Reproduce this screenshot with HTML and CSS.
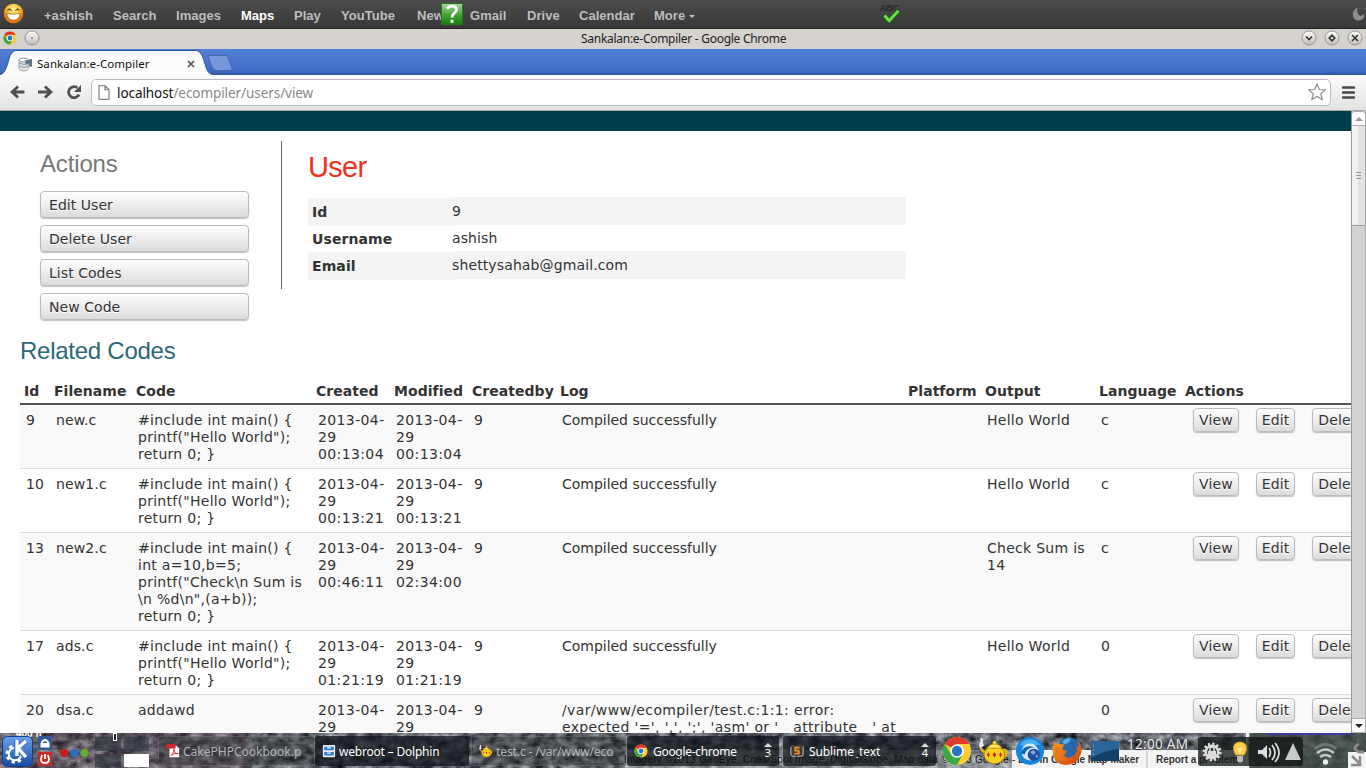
FILE: index.html
```html
<!DOCTYPE html>
<html lang="en">
<head>
<meta charset="utf-8">
<title>Sankalan:e-Compiler</title>
<link rel="stylesheet" href="styles.css">
</head>
<body>
<svg class="defs" width="0" height="0">
  <defs>
    <linearGradient id="knob" x2="0" y2="1"><stop stop-color="#fff"/><stop offset="1" stop-color="#bdbbb8"/></linearGradient>
    <radialGradient id="smile" cy=".3"><stop stop-color="#fff7a0"/><stop offset=".65" stop-color="#ffc13a"/><stop offset="1" stop-color="#e27814"/></radialGradient>
    <linearGradient id="green" x2="0" y2="1"><stop stop-color="#a4dc9a"/><stop offset=".5" stop-color="#48a83a"/><stop offset="1" stop-color="#147a0a"/></linearGradient>
    <linearGradient id="blue" x2="0" y2="1"><stop stop-color="#6ba4ec"/><stop offset="1" stop-color="#164a9e"/></linearGradient>
    <linearGradient id="fox" x2="1" y2="1"><stop stop-color="#f6a01c"/><stop offset="1" stop-color="#d23c10"/></linearGradient>
    <symbol id="chrome" viewBox="0 0 32 32">
      <circle cx="16" cy="16" r="15" fill="#fc3"/>
      <path d="M16 16 3 8.500A15 15 0 0 1 29 8.500H16Z" fill="#dd3a2c"/>
      <path d="M3 8.500 9.900 20 16 31A15 15 0 0 1 3 8.500Z" fill="#36a845"/>
      <path d="m9.900 20 6.100 11 6-11.500Z" fill="#36a845"/>
      <circle cx="16" cy="16" r="7.200" fill="#fff"/><circle cx="16" cy="16" r="5.500" fill="#2b74c4"/>
    </symbol>
    <symbol id="teapot" viewBox="0 0 32 32">
      <path d="M25 15c7-3 6 8-1 9M8 19 2 13" fill="none" stroke="#e6ba10" stroke-width="2.500"/>
      <path d="M2 13c-4-6 2-5 0-11 5 0 1 5 4 8Z" fill="#eee"/>
      <ellipse cx="17" cy="20" rx="11" ry="9.500" fill="#f4cf1c" stroke="#a97c00" stroke-width=".7"/>
      <path d="M9 13c4-6 12-6 16 0Z" fill="#ffe65b" stroke="#a97c00" stroke-width=".7"/><circle cx="17" cy="7" r="2" fill="#f4cf1c"/>
      <path d="m10.500 17 1.500 3-1.500 3-1.500-3Zm6.500 0 2 3-2 3-2-3Zm6.500 0 1.500 3-1.500 3-1.500-3Z" fill="#d3242a"/>
    </symbol>
    <filter id="rock" x="0" y="0" width="100%" height="100%" color-interpolation-filters="sRGB">
      <feTurbulence type="fractalNoise" baseFrequency=".09 .13" numOctaves="4" seed="8"/>
      <feColorMatrix values=".9 .1 0 0 -.13  .9 .1 0 0 -.115  .9 .1 0 0 -.09  0 0 0 0 1"/>
    </filter>
  </defs>
</svg>
<div class="screen">
  <header class="mapbar">
    <svg class="smile" viewBox="0 0 22 22"><circle cx="11" cy="11" r="10.300" fill="url(#smile)"/><path d="M4 11q7 1.500 14 0-1 7-7 7t-7-7Z" fill="#fff" stroke="#9b5d12" stroke-width=".7"/><path d="m4.500 8 2.200-1.800L9 8m4 0 2.300-1.800L17.500 8" fill="none" stroke="#65400d" stroke-width="1.200"/></svg>
    <nav class="mapnav"><span>+ashish</span><span>Search</span><span>Images</span><span class="on">Maps</span><span>Play</span><span>YouTube</span><span>News</span><span>Gmail</span><span>Drive</span><span>Calendar</span><span>More <i class="caret"></i></span></nav>
    <svg class="help" viewBox="0 0 22 22"><rect x=".5" y=".5" width="21" height="21" rx="1" fill="url(#green)" stroke="#247a18"/><path d="M6 5.500Q8 3.200 11 3.200q4.500 0 4.500 3.500c0 3-4.400 3.500-4.400 7.800" fill="none" stroke="#fff" stroke-width="2.800"/><path d="M9.500 16.800h3v3h-3Z" fill="#fff"/></svg>
    <span class="abc">ABC</span>
    <svg class="check" viewBox="0 0 20 16"><path d="m2.500 8 5 5.500L17.500 3" fill="none" stroke="#176b10" stroke-width="5"/><path d="m2.500 8 5 5.500L17.500 3" fill="none" stroke="#75dc53" stroke-width="3"/></svg>
    <svg class="swirl" viewBox="0 0 14 14"><path d="M5.500.7C-1 3-.8 13 6.500 13.500c5 .2 7-4.500 4.500-7C11 10 4 10 5.500.7Z" fill="#8d8d8d"/><path d="M7 1h2m2 .5h2" stroke="#666"/></svg>
  </header>

  <div class="titlebar">
    <svg class="tb-chrome"><use href="#chrome"/></svg>
    <svg class="knob k0" viewBox="0 0 16 16"><circle cx="8" cy="8" r="7" fill="url(#knob)" stroke="#989693"/><circle cx="8" cy="8" r=".8" fill="#555"/></svg>
    <span class="wintitle">Sankalan:e-Compiler - Google Chrome</span>
    <div class="knobs">
      <svg class="knob" viewBox="0 0 16 16"><circle cx="8" cy="8" r="7" fill="url(#knob)" stroke="#989693"/><path d="m5 6.500 3 3 3-3" fill="none" stroke="#333" stroke-width="1.600"/></svg>
      <svg class="knob" viewBox="0 0 16 16"><circle cx="8" cy="8" r="7" fill="url(#knob)" stroke="#989693"/><path d="m8 5.200 2.800 2.800L8 10.800 5.200 8Z" fill="none" stroke="#333" stroke-width="1.600"/></svg>
      <svg class="knob" viewBox="0 0 16 16"><circle cx="8" cy="8" r="7" fill="url(#knob)" stroke="#989693"/><path d="m5 5 6 6m0-6-6 6" stroke="#333" stroke-width="1.600"/></svg>
    </div>
  </div>

  <div class="tabstrip">
    <svg class="tabshape" viewBox="0 0 240 26"><path d="M0 25.500C5 25 7 17 9 10Q11 2 16 1.500H196Q201 2 203.500 10C206 18 207 25 213 25.500V26H0Z" fill="#fbfbfb"/><path d="M0 25.500C5 25 7 17 9 10Q11 2 16 1.500H196Q201 2 203.500 10C206 18 207 25 213 25.500" fill="none" stroke="#2f549b"/><path d="M209 6.500h16.500q2 0 2.800 2l3.700 11q.5 2-1.500 2h-14q-3 0-4-2.500l-4-10q-1-2.500.5-2.500Z" fill="#7598da" stroke="#4167ae"/></svg>
    <svg class="dbicon" viewBox="0 0 15 15"><path d="M1 3v8c0 4 9 4 10 0V3" fill="#dce2e7" stroke="#a0a9b0"/><ellipse cx="6" cy="3" rx="5" ry="2" fill="#fff" stroke="#8f999f"/><path d="M1 6q5 3 10 0M1 9q5 3 10 0" fill="none" stroke="#8f999f"/><path d="M7 3.500 14 2v8l-3-1V6L8 8Z" fill="#5d7488"/></svg>
    <span class="tabtitle">Sankalan:e-Compiler</span>
    <svg class="tabx" viewBox="0 0 8 8"><path d="m1 1 6 6m0-6-6 6" stroke="#555" stroke-width="1.700"/></svg>
  </div>

  <div class="toolbar">
    <svg class="nav" viewBox="0 0 80 18"><path d="M16.500 9H4m6-5.500L4.200 9l5.800 5.500M30 9h13m-6-5.500L42.800 9 37 14.500" fill="none" stroke="#505050" stroke-width="2.900"/><path d="M69.300 4.700a5.500 5.500 0 1 0 1.700 7" fill="none" stroke="#505050" stroke-width="2.800"/><path d="M73 2v7h-7Z" fill="#505050"/></svg>
    <div class="omnibox">
      <svg class="page-ico" viewBox="0 0 12 15"><path d="M1 .7h6l4 4v9.600H1Zm6 0v4h4" fill="#fff" stroke="#8b8b8b" stroke-width="1.300"/></svg>
      <span class="url"><b>localhost</b>/ecompiler/users/view</span>
      <svg class="star" viewBox="0 0 18 18"><path d="m9 1 2.400 5.500 5.900.4-4.500 3.900 1.500 6L9 13.500l-5.300 3.300 1.500-6L.7 6.900l5.900-.4Z" fill="#fff" stroke="#8d8d8d" stroke-width="1.200" stroke-linejoin="round"/></svg>
    </div>
    <svg class="menu" viewBox="0 0 13 13"><path d="M1.200 1.500h10.600M1.200 6.500h10.600M1.200 11.500h10.600" stroke="#484848" stroke-width="2.700" stroke-linecap="round"/></svg>
  </div>

  <div class="viewport">
    <main class="page">
      <div class="band"></div>
      <div class="top">
        <section class="actions">
          <h3>Actions</h3>
          <a class="btn wide">Edit User</a><a class="btn wide">Delete User</a><a class="btn wide">List Codes</a><a class="btn wide">New Code</a>
        </section>
        <section class="user">
          <h2>User</h2>
          <dl><dt class="alt">Id</dt><dd class="alt">9</dd><dt>Username</dt><dd>ashish</dd><dt class="alt">Email</dt><dd class="alt">shettysahab@gmail.com</dd></dl>
        </section>
      </div>
      <h3 class="related">Related Codes</h3>
      <table>
        <colgroup><col class="c1"><col class="c2"><col class="c3"><col class="c4"><col class="c4"><col class="c6"><col class="c7"><col class="c8"><col class="c9"><col class="c10"><col class="c11"></colgroup>
        <thead><tr><th>Id</th><th>Filename</th><th>Code</th><th>Created</th><th>Modified</th><th>Createdby</th><th>Log</th><th>Platform</th><th>Output</th><th>Language</th><th>Actions</th></tr></thead>
        <tbody>
          <tr><td>9</td><td>new.c</td><td>#include int main() {<br>printf("Hello World");<br>return 0; }</td><td>2013-04-<br>29<br>00:13:04</td><td>2013-04-<br>29<br>00:13:04</td><td>9</td><td class="ok">Compiled successfully</td><td></td><td>Hello World</td><td>c</td><td class="acts"><div><a class="btn">View</a><a class="btn">Edit</a><a class="btn">Delete</a></div></td></tr>
          <tr><td>10</td><td>new1.c</td><td>#include int main() {<br>printf("Hello World");<br>return 0; }</td><td>2013-04-<br>29<br>00:13:21</td><td>2013-04-<br>29<br>00:13:21</td><td>9</td><td class="ok">Compiled successfully</td><td></td><td>Hello World</td><td>c</td><td class="acts"><div><a class="btn">View</a><a class="btn">Edit</a><a class="btn">Delete</a></div></td></tr>
          <tr><td>13</td><td>new2.c</td><td>#include int main() {<br>int a=10,b=5;<br>printf("Check\n Sum is<br>\n %d\n",(a+b));<br>return 0; }</td><td>2013-04-<br>29<br>00:46:11</td><td>2013-04-<br>29<br>02:34:00</td><td>9</td><td class="ok">Compiled successfully</td><td></td><td>Check Sum is<br>14</td><td>c</td><td class="acts"><div><a class="btn">View</a><a class="btn">Edit</a><a class="btn">Delete</a></div></td></tr>
          <tr><td>17</td><td>ads.c</td><td>#include int main() {<br>printf("Hello World");<br>return 0; }</td><td>2013-04-<br>29<br>01:21:19</td><td>2013-04-<br>29<br>01:21:19</td><td>9</td><td class="ok">Compiled successfully</td><td></td><td>Hello World</td><td>0</td><td class="acts"><div><a class="btn">View</a><a class="btn">Edit</a><a class="btn">Delete</a></div></td></tr>
          <tr><td>20</td><td>dsa.c</td><td>addawd</td><td>2013-04-<br>29</td><td>2013-04-<br>29</td><td>9</td><td class="err">/var/www/ecompiler/test.c:1:1: error:<br>expected '=', ',', ';', 'asm' or '__attribute__' at</td><td></td><td></td><td>0</td><td class="acts"><div><a class="btn">View</a><a class="btn">Edit</a><a class="btn">Delete</a></div></td></tr>
        </tbody>
      </table>
    </main>
    <div class="scroll">
      <div class="sbtn"><i class="up"></i></div>
      <div class="thumb"><i></i><i></i><i></i></div>
      <div class="track"></div>
      <div class="sbtn last"><i class="down"></i></div>
    </div>
  </div>

  <footer class="taskbar">
    <svg class="rock"><rect width="1366" height="35" filter="url(#rock)"/><path d="M0 0h250v35H0Z" fill="#6d3b4c" opacity=".22"/><path d="M1250 0h116v35h-116Z" fill="#3e4b43" opacity=".75"/><path d="M1012 17h234v18h-234ZM1246 0h3v35h-3Z" fill="#f3f3f3"/><path d="M625 17h387v18H625Z" fill="#fff" opacity=".3"/><path d="M1266 0h86v2h-86Z" fill="#3b3b9c"/><path d="M1147 18v17" stroke="#bbb"/></svg>
    <div class="mapreport"><span>Edit in Google Map Maker</span><span>Report a problem</span></div>
    <span class="scale">400 ft</span>
    <svg class="kmenu" viewBox="0 0 31 31"><rect x=".5" y=".5" width="30" height="30" rx="5" fill="url(#blue)" stroke="#123f8c"/><circle cx="13" cy="18" r="8" fill="none" stroke="#fff" stroke-width="3" stroke-dasharray="3.300 3"/><circle cx="13" cy="18" r="6.300" fill="none" stroke="#fff" stroke-width="2"/><path d="M15 4v16M24 5l-8 7 8 9" fill="none" stroke="#3c79cc" stroke-width="6"/><path d="M15 4v16M24 5l-8 7 8 9" fill="none" stroke="#fff" stroke-width="3.300"/></svg>
    <svg class="lock" viewBox="0 0 14 30"><rect width="14" height="14" rx="1" fill="#345b97"/><path d="M4 11V6q3-4 6 0v5" fill="none" stroke="#fff" stroke-width="2"/><path d="M2.500 7h9v4.500h-9Z" fill="#fff"/><rect y="16" width="14" height="14" rx="1" fill="#c52d28"/><path d="M4 19q-3 8 3 8t3-8M7 18v5" fill="none" stroke="#fff" stroke-width="1.800"/></svg>
    <svg class="dots" viewBox="0 0 30 10"><circle cx="5" cy="5" r="4.200" fill="#c52020"/><circle cx="15.500" cy="5" r="4.200" fill="#2870c0"/><circle cx="25.500" cy="5" r="4.200" fill="#65ad30"/></svg>
    <div class="pager"><i></i><i></i><i></i><i class="cur"></i></div>
    <i class="marker"></i>
    <div class="task dim t1"><svg viewBox="0 0 16 16"><path d="M4 2h8l3 3v10H4Z" fill="#fff"/><path d="M0 0h11v5H0Z" fill="#c9282a"/><path d="M6 13q4-4 3-7 1 6 5 5-5-1-8 2Z" fill="none" stroke="#d22"/></svg><span>CakePHPCookbook.p</span></div>
    <div class="task t2"><svg viewBox="0 0 16 16"><rect x="1" y="1" width="14" height="14" rx="1" fill="#e4eefa"/><path d="M2.500 3h11v4h-11Zm0 6h11v4h-11Z" fill="#2f7ed2"/><path d="M6 4.500h4m-4 6h4" stroke="#fff" stroke-width="1.500"/></svg><span>webroot – Dolphin</span></div>
    <div class="task dim t3"><svg viewBox="0 0 32 32"><use href="#teapot"/></svg><span>test.c - /var/www/eco</span></div>
    <div class="task t4"><svg viewBox="0 0 32 32"><use href="#chrome"/></svg><span>Google-chrome</span><em><i></i>3</em></div>
    <div class="task t5"><svg viewBox="0 0 16 16"><rect x="1" y="1" width="14" height="14" fill="#3b3b3b"/><path d="M1 3v9q0 2 2 2h10q2 0 2-2V3" fill="none" stroke="#d3d3d3"/><path d="M11 4H6v3.500h4V11H5" fill="none" stroke="#f58c1e" stroke-width="2"/></svg><span>Sublime_text</span><em><i></i>4</em></div>
    <div class="mapcredit">Imagery ©2013 GeoEye, Cnes/Spot Image, DigitalGlobe, Map data ©2013 Google -</div>
    <svg class="launch l1" viewBox="0 0 32 32"><use href="#chrome"/></svg>
    <svg class="launch l2" viewBox="0 0 32 32"><use href="#teapot"/></svg>
    <svg class="launch l3" viewBox="0 0 32 32"><circle cx="16" cy="16" r="15" fill="#1686dc"/><path d="M5 9q11-11 22 0l-8 1-8 2Z" fill="#4bb0f2"/><circle cx="16" cy="17" r="9" fill="#d9e8f6"/><circle cx="20" cy="20" r="6.500" fill="#204f9c"/><path d="M6 18q4-10 15-6-9 0-11 8Z" fill="#0f67b8"/><path d="m16 17 4-2 2 3-3 2Zm6 3 3 1-2 3Z" fill="#84afd8"/></svg>
    <svg class="launch l4" viewBox="0 0 32 32"><circle cx="18" cy="14" r="12.500" fill="#2668ab"/><path d="M11 6q5-5 9-3l-2 4-5 2Z" fill="#5eb0df"/><path d="M3 6q1 3 4 2l6 1-2 5 5 2-3 5q6 5 12-2 3-4 1-9l3 2-1-7q6 8 2 16-5 10-16 10Q2 30 1 18 0 11 3 6Z" fill="url(#fox)"/><path d="M3 10q4 2 6 7-2 5 5 10-10-2-11-17Z" fill="#ef7419"/></svg>
    <svg class="launch l5" viewBox="0 0 28 20"><rect width="28" height="20" fill="#123f68"/><path d="M0 0h28v8Q14 9 0 17Z" fill="#2a6499"/><path d="M2 5h1m-1 4h1m-1 4h1" stroke="#f0d868"/></svg>
    <span class="clock">12:00 AM</span>
    <svg class="tray" viewBox="0 0 168 35"><path d="M3 4h47v29H3q-3 0-3-3V7q0-3 3-3Z" fill="#171c1b" opacity=".78"/><path d="M50 4h52q3 0 3 3v23q0 3-3 3H50Z" fill="#171c1b" opacity=".86"/><circle cx="14" cy="19" r="7.500" fill="none" stroke="#ddd" stroke-width="4" stroke-dasharray="2 1.927"/><circle cx="14" cy="19" r="6.300" fill="none" stroke="#ddd" stroke-width="2.500"/><path d="M12 18v-3q2-2 4 0v3" fill="none" stroke="#ddd" stroke-width="1.500"/><path d="M10 18h8v7h-8Z" fill="#ddd"/><path d="M38 22c-5-7-2-13 4-13s9 6 4 13Z" fill="#f9cf4c" stroke="#d69b24"/><path d="M39 16h6m-3 0v5" stroke="#fff2b0" stroke-width="1.500"/><path d="M39 23h6v5q-3 3-6 0Z" fill="#bbb"/><path d="M60 17h4l5-5v14l-5-5h-4Z" fill="#ddd"/><path d="M71 15q3 4 0 9m3-12q6 8 0 15m3-17q8 10 0 19" fill="none" stroke="#ddd" stroke-width="1.700"/><path d="m95 10 8 17H87Z" fill="#c7cbc9"/><path d="M117 16q10.500-9 21 0" fill="none" stroke="#6f7672" stroke-width="3"/><path d="M119 20q8.500-7 17 0m-14 4q5.500-4 11 0" fill="none" stroke="#c4c8c5" stroke-width="2.500"/><circle cx="127.500" cy="29" r="2.700" fill="#eee"/><path d="M150 19h18v16h-18Z" fill="#f2f2f2"/><path d="m154 23 7 7m1-7v9h-9" fill="none" stroke="#8b8b8b" stroke-width="2.500"/><path d="M161 11q-8 4 0 8h5" fill="none" stroke="#888" stroke-width="3"/></svg>
  </footer>
</div>
</body>
</html>
```
FILE: styles.css
```css
* { box-sizing: border-box; }
body { margin: 0; overflow: hidden; font-family: "DejaVu Sans", Verdana, sans-serif; color: #333; }
svg { display: block; flex: none; }
.defs { position: absolute; }
.screen { width: 1366px; height: 768px; display: flex; flex-direction: column; overflow: hidden; background: #fff; }

.mapbar { position: relative; height: 29px; flex: none; background: linear-gradient(#4b4b4b, #393939); border-bottom: 1px solid #211e1f; }
.mapnav { display: grid; grid-template-columns: 69px 63px 65px 53px 47px 76px 53px 57px 52px 75px 60px; padding-left: 44px; font: bold 13px/31px "Liberation Sans", Arial, sans-serif; color: #bdbdbd; letter-spacing: .03px; white-space: nowrap; }
.mapnav .on { color: #fff; }
.caret { display: inline-block; border: 3px solid transparent; border-top-color: #bdbdbd; border-bottom: 0; vertical-align: 2px; }
.smile { position: absolute; left: 3px; top: 3px; width: 21px; height: 21px; }
.help { position: absolute; left: 441px; top: 3px; width: 22px; height: 22px; }
.abc { position: absolute; left: 880px; top: 3px; font: bold 9px/10px "Liberation Sans", sans-serif; color: #292929; }
.check { position: absolute; left: 882px; top: 8px; width: 19px; height: 15px; }
.swirl { position: absolute; left: 1352px; top: 7px; width: 14px; height: 14px; }

.titlebar { position: relative; height: 20px; flex: none; display: flex; align-items: center; padding: 0 3px 2px 3px; background: #d6d2ce; }
.tb-chrome { width: 14px; height: 14px; }
.knob { width: 16px; height: 16px; }
.k0 { margin-left: 7px; }
.wintitle { margin: 2px 0 0 541px; font: 12px/18px "Noto Sans", sans-serif; letter-spacing: -.28px; color: #222; white-space: nowrap; }
.knobs { display: flex; gap: 7px; margin-left: auto; }

.tabstrip { position: relative; height: 26px; flex: none; display: flex; align-items: center; padding: 4px 0 0 18px; background: linear-gradient(#5280d5, #3f6cc7 85%, #2f549b); }
.tabshape { position: absolute; left: 0; top: 0; width: 240px; height: 26px; }
.dbicon { position: relative; width: 15px; height: 15px; }
.tabtitle { position: relative; width: 150px; margin-left: 4px; font: 11.500px/18px "Noto Sans", sans-serif; letter-spacing: .06px; color: #111; white-space: nowrap; }
.tabx { position: relative; width: 8px; height: 8px; }

.toolbar { height: 36px; flex: none; display: flex; align-items: center; padding: 0 11px 1px 8px; background: linear-gradient(#fbfbfb, #e3e3e3); border-bottom: 1px solid #aaa; }
.nav { width: 80px; height: 18px; margin-right: 3px; }
.omnibox { display: flex; align-items: center; width: 1240px; height: 27px; padding: 0 4px 0 6px; background: #fff; border: 1px solid #bdbdbd; border-radius: 5px; }
.page-ico { width: 12px; height: 15px; }
.url { margin: 1px 0 0 7px; font: 13.500px/20px "Noto Sans", sans-serif; letter-spacing: -.07px; color: #888; }
.url b { font-weight: normal; color: #111; }
.star { width: 18px; height: 18px; margin-left: auto; }
.menu { width: 13px; height: 13px; margin-left: 11px; }

.viewport { display: flex; height: 622px; flex: none; overflow: hidden; }
.page { width: 1351px; overflow: hidden; font-size: 14px; line-height: 17px; }
.band { height: 20px; background: #003d4c; }
.top { display: flex; height: 198px; padding: 10px 0 0 40px; }
.actions { width: 242px; height: 148px; border-right: 1px solid #666; }
h2, h3 { margin: 0; font-family: "Liberation Sans", Arial, sans-serif; font-weight: normal; white-space: nowrap; }
.actions h3 { height: 50px; padding-top: 8px; font-size: 24px; line-height: 30px; letter-spacing: -.15px; color: #777; }
.btn { display: block; padding: 2px 5px; color: #333; font-size: 14px; line-height: 18px; border: 1px solid #bbb; border-radius: 4px; background: linear-gradient(#fefefe, #dcdcdc); box-shadow: 0 1px 1px rgba(0,0,0,.25); text-shadow: 0 1px 0 #fff; white-space: nowrap; letter-spacing: .12px; }
.wide { width: 209px; height: 27px; margin-bottom: 7px; padding: 4px 8px 2px; line-height: 19px; letter-spacing: .05px; }
.user { margin-left: 26px; width: 598px; }
.user h2 { height: 57px; padding-top: 9px; font-size: 29px; line-height: 34px; letter-spacing: -.7px; color: #ee3322; }
dl { display: grid; grid-template-columns: 148px 450px; grid-template-rows: 27px 27px 27px; margin: 0; }
dt { padding: 6px 4px; height: 28px; font-weight: bold; letter-spacing: .1px; }
dd { margin: -1px 0 0 -4px; padding: 6px 0; height: 28px; width: 454px; letter-spacing: .12px; }
.alt { background: #f4f4f4; }
.related { height: 46px; padding: 7px 0 0 20px; font-size: 24px; line-height: 30px; letter-spacing: -.26px; color: #2c6877; }
table { width: 1400px; margin-left: 20px; table-layout: fixed; border-collapse: separate; border-spacing: 0; }
.c1 { width: 30px; } .c2 { width: 82px; } .c3 { width: 180px; } .c4 { width: 78px; } .c6 { width: 88px; } .c7 { width: 348px; } .c8 { width: 77px; } .c9 { width: 114px; } .c10 { width: 86px; } .c11 { width: 239px; }
th { height: 30px; padding: 8px 4px 3px; text-align: left; border-bottom: 2px solid #555; letter-spacing: .04px; }
td { padding: 7px 6px 5px; vertical-align: top; border-bottom: 1px solid #ddd; white-space: nowrap; letter-spacing: .28px; }
td:nth-child(1), td:nth-child(2) { letter-spacing: .12px; }
td:nth-child(4), td:nth-child(5) { letter-spacing: .38px; }
td.ok { letter-spacing: -.02px; }
td.err { letter-spacing: .36px; }
tbody tr:nth-child(odd) { background: #f9f9f9; }
td.acts { padding: 3px 0 0 12px; }
.acts div { display: flex; gap: 17px; }

.scroll { width: 15px; display: flex; flex-direction: column; border-left: 1px solid #999; border-right: 1px solid #aaa; background: #d2d2d2; }
.sbtn { height: 15px; display: flex; align-items: center; justify-content: center; background: #fcfcfc; border: 1px solid #aaa; border-width: 1px 0; border-radius: 3px 3px 0 0; }
.sbtn.last { border-radius: 0 0 3px 3px; }
.up { border: 4px solid transparent; border-top: 0; border-bottom-color: #999; }
.down { border: 4px solid transparent; border-bottom: 0; border-top-color: #222; }
.thumb { height: 100px; display: flex; flex-direction: column; gap: 2px; align-items: center; justify-content: center; background: linear-gradient(90deg, #f2f2f2 50%, #e2e2e2 50%); border-bottom: 1px solid #999; }
.thumb i { width: 5px; height: 1px; background: #999; }
.track { flex: 1; }

.taskbar { position: relative; display: flex; align-items: center; height: 35px; flex: none; padding: 1px 0 0 2px; overflow: hidden; font-family: "Noto Sans", sans-serif; }
.taskbar > * { position: relative; }
.taskbar .rock { position: absolute; left: 0; top: 0; width: 1366px; height: 35px; }
.taskbar .mapcredit { position: absolute; left: 624px; top: 20px; font: 10px/13px "Liberation Sans", sans-serif; color: #111; white-space: nowrap; letter-spacing: .27px; }
.taskbar .mapreport { position: absolute; left: 1018px; top: 20px; display: flex; gap: 17px; font: bold 10px/13px "Liberation Sans", sans-serif; color: #333; white-space: nowrap; letter-spacing: -.05px; }
.taskbar .scale { position: absolute; left: 16px; top: -5px; font: bold 10px/12px "Liberation Sans", sans-serif; color: #fff; }
.taskbar .marker { position: absolute; left: 113px; top: 0; width: 4px; height: 8px; border: 1px solid #fff; background: #222; }
.kmenu { width: 31px; height: 31px; }
.lock { width: 14px; height: 30px; margin-left: 5px; }
.dots { width: 30px; height: 10px; margin: 4px 0 0 7px; }
.pager { display: grid; grid-template-columns: 26px 25px; grid-template-rows: 14px 13px; gap: 3px; width: 58px; margin: 1px 0 0 6px; }
.pager i { background: rgba(48,56,64,.65); }
.pager .cur { background: #fff; }
.task { display: flex; align-items: center; flex: none; height: 30px; border-radius: 3px; padding: 0 7px; background: rgba(13,19,23,.72); color: #fff; font-size: 12px; white-space: nowrap; overflow: hidden; }
.task svg { width: 14px; height: 14px; margin-right: 3px; }
.task.dim { background: rgba(45,50,53,.4); color: #b4b4b4; border: 1px solid rgba(255,255,255,.15); }
.t1 { width: 157px; margin-left: 5px; }
.t2 { width: 154px; }
.t2 span { letter-spacing: -.2px; }
.t3 { width: 156px; margin-left: 2px; }
.t3 span { letter-spacing: -.1px; }
.t4 { width: 152px; }
.t4 span { margin-left: 2px; letter-spacing: -.3px; }
.t5 { width: 153px; margin-left: 4px; }
.t5 span { margin-left: 2px; letter-spacing: -.1px; }
.task em { margin-left: auto; display: flex; flex-direction: column; align-items: center; font-style: normal; font-size: 11px; line-height: 12px; }
.task em i { border: 4px solid transparent; border-top: 0; border-bottom-color: #ddd; }
.launch { height: 30px; width: 30px; }
.l1 { margin-left: 6px; } .l2 { margin-left: 6px; width: 31px; } .l3 { width: 32px; margin-left: 5px; } .l4 { margin-left: 6px; } .l5 { width: 28px; height: 20px; margin-left: 9px; }
.taskbar .clock { position: absolute; left: 1127px; top: 3px; font-size: 13.500px; line-height: 17px; letter-spacing: .3px; color: #ececec; text-shadow: 0 0 2px #222; white-space: nowrap; }
.taskbar .tray { position: absolute; left: 1198px; top: 0; width: 168px; height: 35px; }
```
